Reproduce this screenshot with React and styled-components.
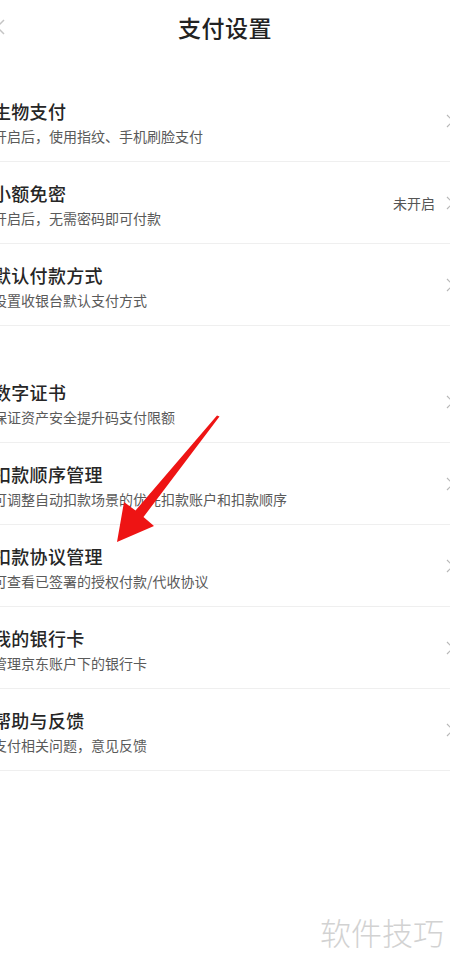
import React from "react";
import styled, { createGlobalStyle } from "styled-components";

const Global = createGlobalStyle`
  html, body { margin: 0; padding: 0; background: #fff; }
  body { font-family: "Noto Sans CJK SC", "Noto Sans", sans-serif; overflow: hidden; }
  #root { width: 450px; }
`;

const Page = styled.div`
  position: relative;
  width: 450px;
  height: 974px;
  overflow: hidden;
  background: #fff;
`;

const Header = styled.header`
  height: 54px;
  display: flex;
  align-items: center;
  justify-content: center;
  position: relative;
`;

const Back = styled.svg`
  position: absolute;
  left: -4px;
  top: 19px;
`;

const Title = styled.h1`
  margin: 0;
  font-size: 23px;
  font-weight: 500;
  color: #222;
  letter-spacing: 0.5px;
`;

const Section = styled.section`
  margin-top: ${(p) => p.$gap}px;
`;

const Row = styled.div`
  height: 81px;
  border-bottom: 1px solid #efefef;
  display: flex;
  align-items: center;
  box-sizing: content-box;
`;

const Texts = styled.div`
  flex: 1;
  margin-left: -7px;
  padding-top: 3px;
  display: flex;
  flex-direction: column;
  gap: 3px;
`;

const RowTitle = styled.div`
  font-size: 18px;
  line-height: 24px;
  font-weight: 500;
  color: #262626;
  letter-spacing: 0.3px;
`;

const RowSub = styled.div`
  font-size: 14px;
  line-height: 20px;
  color: #5a5a5a;
`;

const Right = styled.div`
  display: flex;
  align-items: center;
  gap: 11px;
  margin-right: -4px;
`;

const Value = styled.span`
  font-size: 14px;
  color: #555;
`;

const Watermark = styled.div`
  position: absolute;
  right: 6px;
  bottom: 20px;
  font-size: 31px;
  font-weight: 300;
  color: #d2d2d2;
`;

const Overlay = styled.svg`
  position: absolute;
  left: 0;
  top: 0;
  pointer-events: none;
`;

const Chevron = () => (
  <svg width="8" height="14" viewBox="0 0 8 14">
    <polyline points="1,1 7,7 1,13" fill="none" stroke="#b8b8b8" strokeWidth="1.2" />
  </svg>
);

const group1 = [
  { t: "生物支付", s: "开启后，使用指纹、手机刷脸支付" },
  { t: "小额免密", s: "开启后，无需密码即可付款", v: "未开启" },
  { t: "默认付款方式", s: "设置收银台默认支付方式" },
];
const group2 = [
  { t: "数字证书", s: "保证资产安全提升码支付限额" },
  { t: "扣款顺序管理", s: "可调整自动扣款场景的优先扣款账户和扣款顺序" },
  { t: "扣款协议管理", s: "可查看已签署的授权付款/代收协议" },
  { t: "我的银行卡", s: "管理京东账户下的银行卡" },
  { t: "帮助与反馈", s: "支付相关问题，意见反馈" },
];

const Item = ({ t, s, v }) => (
  <Row>
    <Texts>
      <RowTitle>{t}</RowTitle>
      <RowSub>{s}</RowSub>
    </Texts>
    <Right>
      {v && <Value>{v}</Value>}
      <Chevron />
    </Right>
  </Row>
);

export default function App() {
  return (
    <Page>
      <Global />
      <Header>
        <Back width="10" height="16" viewBox="0 0 10 16">
          <polyline points="8,1 1,8 8,15" fill="none" stroke="#c4c4c4" strokeWidth="1.5" />
        </Back>
        <Title>支付设置</Title>
      </Header>
      <Section $gap={26}>
        {group1.map((it) => (
          <Item key={it.t} {...it} />
        ))}
      </Section>
      <Section $gap={35}>
        {group2.map((it) => (
          <Item key={it.t} {...it} />
        ))}
      </Section>
      <Overlay width="450" height="974" viewBox="0 0 450 974">
        <polygon
          points="117,542 154,526 143.5,517 219.5,416.5 217,415.5 135.5,510.5 124,502"
          fill="#ee1414"
        />
      </Overlay>
      <Watermark>软件技巧</Watermark>
    </Page>
  );
}
